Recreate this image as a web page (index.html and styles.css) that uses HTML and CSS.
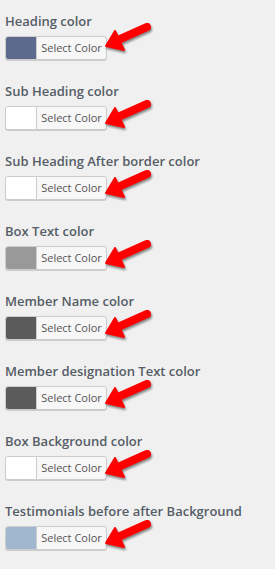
FILE: index.html
```html
<!DOCTYPE html>
<html lang="en">
<head>
    <meta charset="UTF-8">
    <title>Color settings</title>
    <link rel="stylesheet" href="styles.css">
</head>
<body>
    <svg width="0" height="0" class="defs">
        <defs>
            <symbol id="arrow" viewBox="0 0 54 36">
                <line x1="47" y1="7" x2="18" y2="20" stroke="#f00" stroke-width="8" stroke-linecap="round"/>
                <polygon points="6,26 24,30 15,11" fill="#f00" stroke="#f00" stroke-width="2" stroke-linejoin="round"/>
            </symbol>
        </defs>
    </svg>

    <div class="settings">
        <div class="field">
            <label class="field-label">Heading color</label>
            <div class="picker">
                <span class="swatch" style="background:#5d6a8e"></span>
                <span class="picker-text">Select Color</span>
            </div>
            <svg class="arrow arrow-first"><use href="#arrow"/></svg>
        </div>

        <div class="field">
            <label class="field-label">Sub Heading color</label>
            <div class="picker">
                <span class="swatch" style="background:#fff"></span>
                <span class="picker-text">Select Color</span>
            </div>
            <svg class="arrow"><use href="#arrow"/></svg>
        </div>

        <div class="field">
            <label class="field-label">Sub Heading After border color</label>
            <div class="picker">
                <span class="swatch" style="background:#fff"></span>
                <span class="picker-text">Select Color</span>
            </div>
            <svg class="arrow"><use href="#arrow"/></svg>
        </div>

        <div class="field">
            <label class="field-label">Box Text color</label>
            <div class="picker">
                <span class="swatch" style="background:#999"></span>
                <span class="picker-text">Select Color</span>
            </div>
            <svg class="arrow"><use href="#arrow"/></svg>
        </div>

        <div class="field">
            <label class="field-label">Member Name color</label>
            <div class="picker">
                <span class="swatch" style="background:#5b5b5b"></span>
                <span class="picker-text">Select Color</span>
            </div>
            <svg class="arrow"><use href="#arrow"/></svg>
        </div>

        <div class="field">
            <label class="field-label">Member designation Text color</label>
            <div class="picker">
                <span class="swatch" style="background:#5b5b5b"></span>
                <span class="picker-text">Select Color</span>
            </div>
            <svg class="arrow"><use href="#arrow"/></svg>
        </div>

        <div class="field">
            <label class="field-label">Box Background color</label>
            <div class="picker">
                <span class="swatch" style="background:#fff"></span>
                <span class="picker-text">Select Color</span>
            </div>
            <svg class="arrow"><use href="#arrow"/></svg>
        </div>

        <div class="field">
            <label class="field-label">Testimonials before after Background</label>
            <div class="picker">
                <span class="swatch" style="background:#a1b7d0"></span>
                <span class="picker-text">Select Color</span>
            </div>
            <svg class="arrow"><use href="#arrow"/></svg>
        </div>
    </div>
</body>
</html>
```

FILE: styles.css
```css
/* General */
body {
    margin: 0;
    background: #f0f0f0;
    font-family: 'Open Sans', sans-serif;
    color: #555d66;
}

.defs {
    position: absolute;
}

.settings {
    display: flex;
    flex-direction: column;
    padding: 12px 0 0 5px;
}

/* One color field */
.field {
    position: relative;
    height: 70px;
}

.field-label {
    display: block;
    font-size: 13px;
    font-weight: 600;
    line-height: 18px;
    margin-bottom: 6px;
}

/* Color picker button */
.picker {
    display: flex;
    width: 102px;
    height: 24px;
    box-sizing: border-box;
    border: 1px solid #ccc;
    border-radius: 3px;
    background: #f7f7f7;
    box-shadow: 0 1px 0 #ccc;
    overflow: hidden;
}

.swatch {
    width: 30px;
    border-right: 1px solid #ccc;
}

.picker-text {
    flex: 1;
    font-size: 11px;
    line-height: 22px;
    text-align: center;
    color: #555;
}

/* Red arrows */
.arrow {
    position: absolute;
    left: 95px;
    top: 15px;
    width: 54px;
    height: 36px;
    filter: drop-shadow(1px 2px 1px rgba(0, 0, 0, 0.45));
}

.arrow-first {
    top: 8px;
}
```
